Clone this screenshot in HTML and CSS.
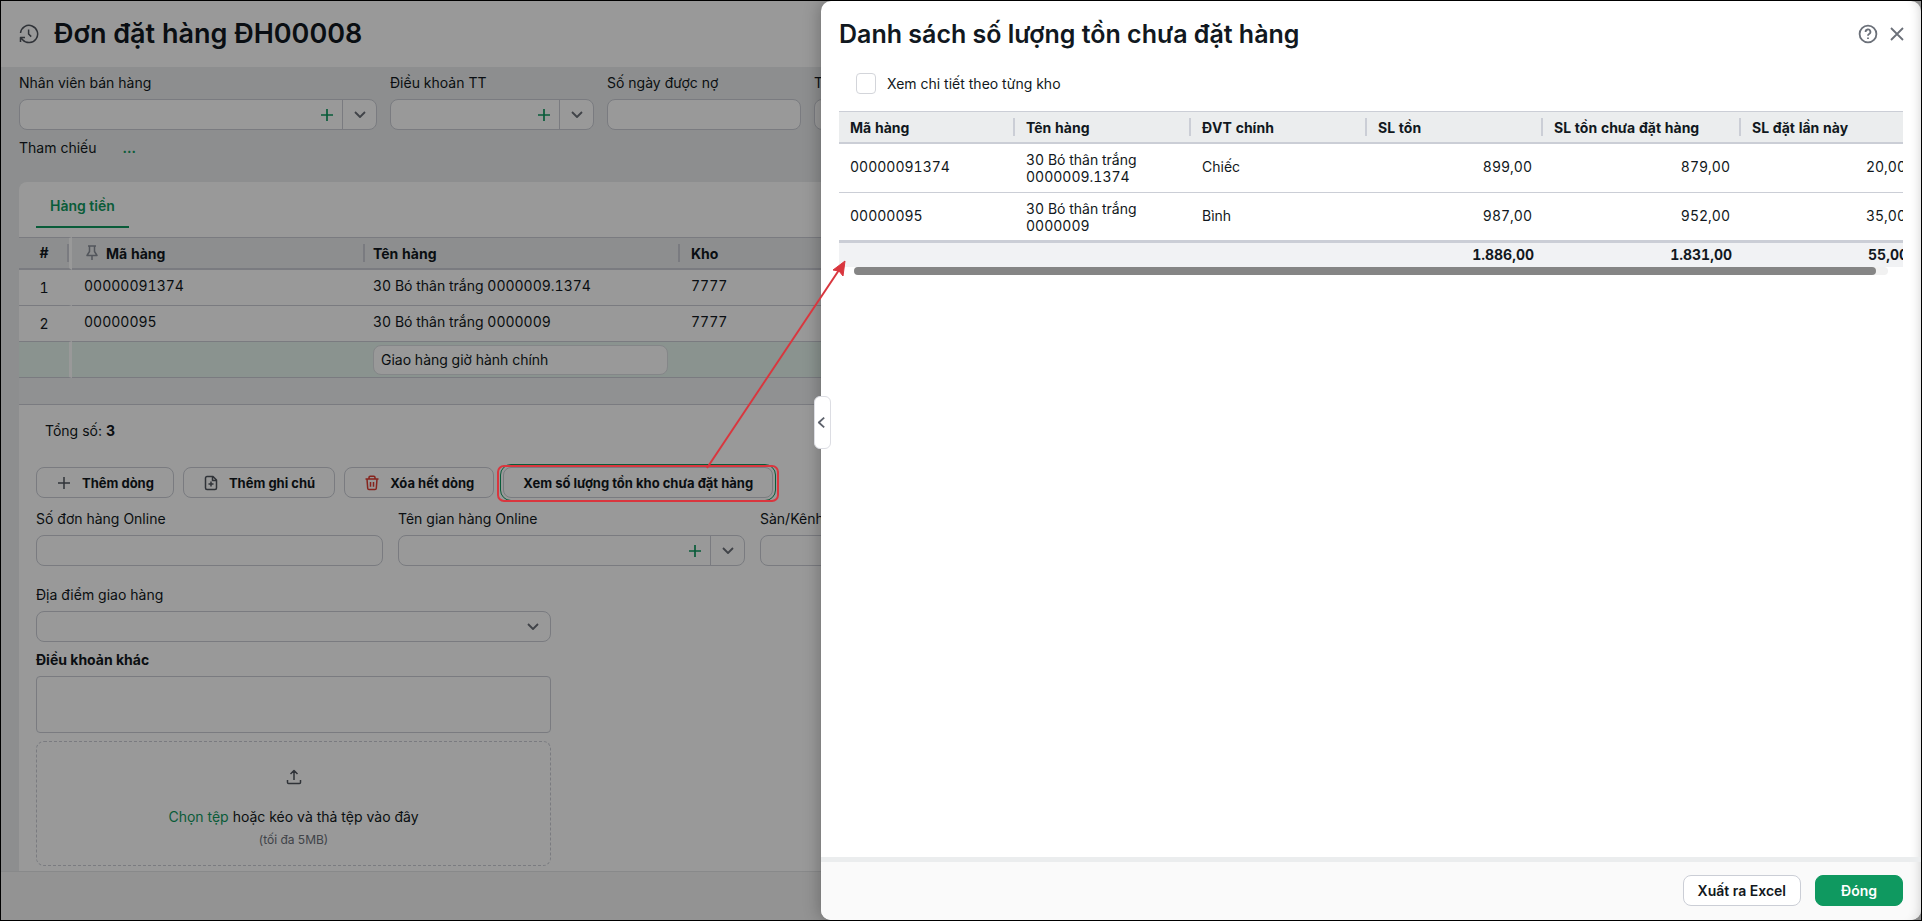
FILE: index.html
```html
<!DOCTYPE html>
<html lang="vi">
<head>
    <meta charset="UTF-8">
    <meta name="viewport" content="width=device-width, initial-scale=1.0">
    <title>Đơn đặt hàng ĐH00008</title>
    <link rel="stylesheet" href="styles.css">
</head>
<body>
    <!-- shared icons -->
    <svg class="icon-defs" width="0" height="0" aria-hidden="true">
        <symbol id="i-plus" viewBox="0 0 16 16"><path d="M8 2v12M2 8h12"/></symbol>
        <symbol id="i-down" viewBox="0 0 16 16"><path d="M3 5l5 5 5-5"/></symbol>
    </svg>

    <div class="page">
        <header class="page-header">
            <svg class="icon history-icon" viewBox="0 0 20 20">
                <path d="M1.500 9A8.600 8.600 0 1 1 3.600 15.700L1.500 13.500M1.500 18v-4.500h4.500M3.600 15.700A8.600 8.600 0 0 0 10 18.600M9.600 5.500v4.500l2.600 2.600"/>
            </svg>
            <h1>Đơn đặt hàng ĐH00008</h1>
        </header>

        <main class="content">
            <div class="top-fields">
                <div class="field w-employee">
                    <label for="employee">Nhân viên bán hàng</label>
                    <div class="combo">
                        <input type="text" id="employee">
                        <button type="button" class="add" aria-label="Thêm"><svg class="icon"><use href="#i-plus"/></svg></button>
                        <button type="button" class="drop" aria-label="Mở"><svg class="icon"><use href="#i-down"/></svg></button>
                    </div>
                </div>
                <div class="field w-term">
                    <label for="term">Điều khoản TT</label>
                    <div class="combo">
                        <input type="text" id="term">
                        <button type="button" class="add" aria-label="Thêm"><svg class="icon"><use href="#i-plus"/></svg></button>
                        <button type="button" class="drop" aria-label="Mở"><svg class="icon"><use href="#i-down"/></svg></button>
                    </div>
                </div>
                <div class="field w-days">
                    <label for="days">Số ngày được nợ</label>
                    <input type="text" id="days" class="box">
                </div>
                <div class="field w-days">
                    <label for="status">Tình trạng</label>
                    <input type="text" id="status" class="box">
                </div>
            </div>
            <div class="reference">
                <span>Tham chiếu</span>
                <a href="#">...</a>
            </div>

            <section class="panel">
                <nav class="tabs"><a href="#" class="tab">Hàng tiền</a></nav>

                <table class="items">
                    <colgroup>
                        <col class="c-no"><col class="c-code"><col class="c-name"><col>
                    </colgroup>
                    <thead>
                        <tr>
                            <th class="no">#</th>
                            <th>
                                <svg class="icon pin" viewBox="0 0 12 16"><path d="M2 1h8M3.500 1v5.500L1 10.500h10L8.500 6.500V1M6 10.500V15"/></svg>Mã hàng
                            </th>
                            <th>Tên hàng</th>
                            <th>Kho</th>
                        </tr>
                    </thead>
                    <tbody>
                        <tr>
                            <td class="no">1</td>
                            <td>00000091374</td>
                            <td>30 Bó thân trắng 0000009.1374</td>
                            <td>7777</td>
                        </tr>
                        <tr>
                            <td class="no">2</td>
                            <td>00000095</td>
                            <td>30 Bó thân trắng 0000009</td>
                            <td>7777</td>
                        </tr>
                        <tr class="note-row">
                            <td class="no"></td>
                            <td></td>
                            <td><input type="text" class="note" aria-label="Ghi chú" value="Giao hàng giờ hành chính"></td>
                            <td></td>
                        </tr>
                    </tbody>
                </table>
                <div class="table-end"></div>

                <div class="panel-body">
                    <p class="total">Tổng số: <b>3</b></p>

                    <div class="actions">
                        <button type="button" class="btn">
                            <svg class="icon"><use href="#i-plus"/></svg>Thêm dòng
                        </button>
                        <button type="button" class="btn">
                            <svg class="icon" viewBox="0 0 16 16"><path d="M10 1.500H4A1.500 1.500 0 0 0 2.500 3v10A1.500 1.500 0 0 0 4 14.500h8a1.500 1.500 0 0 0 1.500-1.500V5zM9.500 1.500V5.500h4M8 6.500v5M5.500 9h5"/></svg>Thêm ghi chú
                        </button>
                        <button type="button" class="btn">
                            <svg class="icon trash" viewBox="0 0 16 16"><path d="M1.500 4h13M5 4V2.500A1.200 1.200 0 0 1 6.200 1.300h3.600A1.200 1.200 0 0 1 11 2.500V4M3 4l.7 9.300a1.300 1.300 0 0 0 1.300 1.200h6a1.300 1.300 0 0 0 1.300-1.200L13 4M6.500 7v4.700M9.500 7v4.700"/></svg>Xóa hết dòng
                        </button>
                        <button type="button" class="btn focused">Xem số lượng tồn kho chưa đặt hàng</button>
                    </div>

                    <div class="online-fields">
                        <div class="field">
                            <label for="order-no">Số đơn hàng Online</label>
                            <input type="text" id="order-no" class="box">
                        </div>
                        <div class="field">
                            <label for="shop">Tên gian hàng Online</label>
                            <div class="combo">
                                <input type="text" id="shop">
                                <button type="button" class="add" aria-label="Thêm"><svg class="icon"><use href="#i-plus"/></svg></button>
                                <button type="button" class="drop" aria-label="Mở"><svg class="icon"><use href="#i-down"/></svg></button>
                            </div>
                        </div>
                        <div class="field">
                            <label for="channel">Sàn/Kênh</label>
                            <input type="text" id="channel" class="box">
                        </div>
                    </div>

                    <div class="narrow">
                        <div class="field place">
                            <label for="place">Địa điểm giao hàng</label>
                            <div class="combo">
                                <select id="place"><option></option></select>
                                <svg class="icon select-icon"><use href="#i-down"/></svg>
                            </div>
                        </div>
                        <label for="terms" class="strong">Điều khoản khác</label>
                        <textarea id="terms"></textarea>
                        <div class="dropzone">
                            <svg class="icon upload" viewBox="0 0 16 16"><path d="M8 11V1.500M4.500 5L8 1.500 11.500 5M1.500 11v2.500a1 1 0 0 0 1 1h11a1 1 0 0 0 1-1V11"/></svg>
                            <p><a href="#">Chọn tệp</a> hoặc kéo và thả tệp vào đây</p>
                            <small>(tối đa 5MB)</small>
                        </div>
                    </div>
                </div>
            </section>
        </main>
        <footer class="page-footer"></footer>
    </div>

    <div class="overlay"></div>

    <aside class="drawer">
        <button type="button" class="handle" aria-label="Mở rộng">
            <svg class="icon" viewBox="0 0 10 16"><path d="M8 2.500L2 8l6 5.500"/></svg>
        </button>
        <div class="drawer-header">
            <h2>Danh sách số lượng tồn chưa đặt hàng</h2>
            <button type="button" class="icon-btn" aria-label="Trợ giúp">
                <svg class="icon" width="20" height="20" viewBox="0 0 20 20"><circle cx="10" cy="10" r="8.400"/><path d="M7.600 7.900a2.400 2.400 0 1 1 3.500 2.100c-.8.400-1.100.8-1.100 1.700M10 13.600v1.400"/></svg>
            </button>
            <button type="button" class="icon-btn" aria-label="Đóng cửa sổ">
                <svg class="icon" width="14" height="14" viewBox="0 0 14 14"><path d="M1 1l12 12M13 1L1 13"/></svg>
            </button>
        </div>
        <div class="drawer-body">
            <label class="check"><input type="checkbox">Xem chi tiết theo từng kho</label>
            <div class="stock-wrap">
                <table class="stock">
                    <colgroup>
                        <col><col><col><col><col class="c-wide"><col>
                    </colgroup>
                    <thead>
                        <tr>
                            <th>Mã hàng</th>
                            <th>Tên hàng</th>
                            <th>ĐVT chính</th>
                            <th>SL tồn</th>
                            <th>SL tồn chưa đặt hàng</th>
                            <th>SL đặt lần này</th>
                        </tr>
                    </thead>
                    <tbody>
                        <tr>
                            <td>00000091374</td>
                            <td class="name">30 Bó thân trắng 0000009.1374</td>
                            <td>Chiếc</td>
                            <td class="num">899,00</td>
                            <td class="num">879,00</td>
                            <td class="num">20,00</td>
                        </tr>
                        <tr>
                            <td>00000095</td>
                            <td class="name">30 Bó thân trắng 0000009</td>
                            <td>Bình</td>
                            <td class="num">987,00</td>
                            <td class="num">952,00</td>
                            <td class="num">35,00</td>
                        </tr>
                    </tbody>
                    <tfoot>
                        <tr>
                            <td></td>
                            <td></td>
                            <td></td>
                            <td class="num">1.886,00</td>
                            <td class="num">1.831,00</td>
                            <td class="num">55,00</td>
                        </tr>
                    </tfoot>
                </table>
            </div>
            <div class="scroll"><div class="thumb"></div></div>
        </div>
        <div class="drawer-footer">
            <button type="button" class="btn export">Xuất ra Excel</button>
            <button type="button" class="btn primary">Đóng</button>
        </div>
    </aside>

    <!-- pointer from the button to the stock list -->
    <svg class="callout" width="860" height="520" viewBox="0 0 860 520">
        <rect x="497" y="465" width="280" height="35" rx="6"/>
        <path d="M706 467L838 269"/>
        <polygon points="844,260 842,275 838,270 832,269"/>
    </svg>
</body>
</html>
```
FILE: styles.css
```css
* {
    box-sizing: border-box;
}
body {
    position: relative;
    margin: 0;
    min-height: 100vh;
    display: flex;
    border: 1px solid #000;
    overflow: hidden;
    font-family: Inter, "Noto Sans", sans-serif;
    font-size: 14px;
    line-height: 20px;
    color: #111820;
}
h1, h2, p {
    margin: 0;
}
a {
    color: #0f9960;
    text-decoration: none;
}
button, input, select, textarea {
    font: inherit;
    color: inherit;
}
button {
    padding: 0;
    cursor: pointer;
}
.icon-defs {
    position: absolute;
}
.icon {
    width: 16px;
    height: 16px;
    flex: none;
    fill: none;
    stroke: #50555e;
    stroke-width: 1.5;
    stroke-linejoin: round;
}

/* order page */
.page {
    flex: 1;
    min-width: 0;
    display: flex;
    flex-direction: column;
    background: #ebedee;
}
.page-header {
    display: flex;
    align-items: center;
    gap: 15px;
    height: 66px;
    padding-left: 18px;
    background: #fff;
}
.page-header h1 {
    font-size: 27px;
    line-height: 36px;
    font-weight: 600;
}
.history-icon {
    width: 20px;
    height: 20px;
}
.content {
    flex: 1;
    display: flex;
    flex-direction: column;
    padding: 6px 0 0 18px;
}
.top-fields, .online-fields {
    display: flex;
    gap: 13px;
}
.field {
    flex: none;
    display: flex;
    flex-direction: column;
    gap: 6px;
}
.w-employee {
    width: 358px;
}
.w-term {
    width: 204px;
}
.w-days {
    width: 194px;
}
.box, .combo {
    width: 100%;
    height: 31px;
    padding: 0 8px;
    border: 1px solid #cbced6;
    border-radius: 8px;
    background: #fff;
}
.combo {
    display: flex;
    align-items: stretch;
    padding: 0;
}
.combo input, .combo select {
    flex: 1;
    min-width: 0;
    padding: 0 8px;
    border: none;
    background: none;
    appearance: none;
}
.combo button {
    display: flex;
    align-items: center;
    justify-content: center;
    width: 34px;
    border: none;
    background: none;
}
.combo .add {
    width: 30px;
}
.combo .add .icon {
    stroke: #0f9960;
    stroke-width: 1.7;
}
.combo .drop {
    border-left: 1px solid #cbced6;
}
.drop .icon, .select-icon {
    stroke: #6b7079;
    stroke-width: 1.8;
}
.reference {
    display: flex;
    gap: 26px;
    padding-top: 8px;
    margin-bottom: 24px;
}
.reference a {
    font-weight: 600;
}
.panel {
    flex: 1;
    background: #fff;
    border-top-left-radius: 8px;
}
.tabs {
    display: flex;
    padding-left: 17px;
    height: 55px;
}
.tab {
    height: 46px;
    padding: 14px 14px 0;
    border-bottom: 2px solid #0f9960;
    font-weight: 600;
}
.items, .stock {
    table-layout: fixed;
    border-spacing: 0;
    font-variant-numeric: tabular-nums;
}
.items {
    width: 100%;
}
.c-no {
    width: 53px;
}
.c-code {
    width: 293px;
}
.c-name {
    width: 315px;
}
th {
    height: 33px;
    text-align: left;
    font-weight: 700;
    border-top: 1px solid #cbced6;
    border-bottom: 2px solid #cbced6;
    background: #ebedee linear-gradient(#cbced6, #cbced6) no-repeat right center / 2px 18px;
}
.items th {
    padding: 2px 11px 0 8px;
}
.items td {
    height: 36px;
    padding: 0 11px 3px 8px;
    border-bottom: 1px solid #cbced6;
}
.items .no {
    padding: 0;
    text-align: center;
    border-right: 3px solid #fff;
}
.items th:nth-child(2), .items td:nth-child(2) {
    padding-left: 12px;
}
.items th:last-child, .items td:last-child {
    padding-left: 11px;
}
.pin {
    width: 12px;
    height: 16px;
    margin: 0 8px 0 2px;
    vertical-align: -2px;
    stroke: #8b909a;
}
.items .note-row td {
    padding-bottom: 0;
    background: #e6f5ee;
}
.note {
    display: block;
    width: 295px;
    height: 30px;
    padding: 0 7px;
    border: 1px solid #dcdfe3;
    border-radius: 8px;
    background: #fff;
}
.table-end {
    height: 27px;
    border-bottom: 1px solid #cbced6;
    background: #f1f2f3;
}
.panel-body {
    padding: 16px 17px 4px;
}
.total {
    padding-left: 9px;
}
.actions {
    display: flex;
    gap: 9px;
    margin: 26px 0 11px;
}
.btn {
    display: flex;
    align-items: center;
    justify-content: center;
    gap: 10px;
    height: 31px;
    padding: 0 19px;
    border: 1px solid #cbced6;
    border-radius: 8px;
    background: #fff;
    font-size: 13px;
    font-weight: 700;
}
.focused {
    outline: 1px solid #0f9960;
    outline-offset: 2px;
}
.trash {
    stroke: #e03c31;
}
.online-fields {
    gap: 15px;
}
.online-fields .field {
    width: 347px;
}
.narrow {
    display: flex;
    flex-direction: column;
    width: 515px;
    margin-top: 19px;
}
.select-icon {
    align-self: center;
    margin-right: 9px;
}
.strong {
    margin: 8px 0 6px;
    font-weight: 700;
}
textarea {
    height: 57px;
    border: 1px solid #cbced6;
    border-radius: 4px;
    resize: none;
}
.dropzone {
    display: flex;
    flex-direction: column;
    align-items: center;
    margin-top: 8px;
    padding: 27px 0 15px;
    border: 1px dashed #cbced6;
    border-radius: 8px;
}
.dropzone p {
    margin: 22px 0 3px;
}
.dropzone small {
    font-size: 12px;
    color: #6b7079;
}
.page-footer {
    height: 49px;
    border-top: 1px solid #e3e5e7;
    background: #f5f5f5;
}
.overlay {
    position: absolute;
    inset: 0;
    background: rgba(0, 0, 0, 0.4);
}

/* stock drawer */
.drawer {
    position: absolute;
    inset: 0 0 0 820px;
    display: flex;
    flex-direction: column;
    border-radius: 10px;
    background: #fff;
    box-shadow: inset -12px 0 12px -12px rgba(0, 0, 0, 0.2), -2px 0 16px rgba(0, 0, 0, 0.25);
}
.handle {
    position: absolute;
    left: -7px;
    top: 395px;
    display: flex;
    align-items: center;
    width: 17px;
    height: 53px;
    padding-left: 2px;
    border: 1px solid #dcdde3;
    border-radius: 6px;
    background: #fff;
}
.handle .icon {
    width: 9px;
    height: 15px;
    stroke: #5d616b;
    stroke-width: 2;
}
.drawer-header {
    display: flex;
    align-items: center;
    gap: 12px;
    height: 66px;
    padding: 0 17px 0 18px;
}
.drawer-header h2 {
    flex: 1;
    font-size: 25px;
    line-height: 32px;
    font-weight: 600;
}
.icon-btn {
    display: flex;
    border: none;
    background: none;
}
.icon-btn .icon {
    width: auto;
    height: auto;
    stroke: #6b7079;
    stroke-width: 1.8;
}
.drawer-body {
    flex: 1;
    padding: 6px 18px 0;
}
.check {
    display: flex;
    align-items: center;
    gap: 11px;
    margin: 0 0 17px 17px;
}
.check input {
    width: 20px;
    height: 21px;
    margin: 0;
    appearance: none;
    border: 1px solid #d3d5da;
    border-radius: 4px;
    background: #fff;
}
.stock-wrap {
    overflow: hidden;
}
.stock {
    width: 1078px;
}
.stock col {
    width: 176px;
}
.stock .c-wide {
    width: 198px;
}
.stock th {
    padding: 2px 11px 0;
}
.stock td {
    height: 49px;
    padding: 0 11px 3px;
    line-height: 17px;
    border-bottom: 1px solid #cbced6;
}
.stock .name {
    padding-bottom: 0;
    padding-right: 40px;
}
.stock tbody tr:last-child td {
    height: 50px;
    border-bottom: 3px solid #cbced6;
}
.stock .num {
    text-align: right;
}
.stock tfoot td {
    height: 24px;
    padding: 0 9px 2px 0;
    border: none;
    background: #f1f2f4;
    font-weight: 700;
}
.scroll {
    height: 8px;
    margin: 0 15px;
    background: #f1f1f1;
    border-radius: 4px;
}
.thumb {
    height: 8px;
    margin-right: 12px;
    border-radius: 4px;
    background: #858585;
}
.drawer-footer {
    display: flex;
    justify-content: flex-end;
    gap: 14px;
    height: 63px;
    padding: 13px 18px 0;
    border-top: 5px solid #ebedee;
    border-radius: 0 0 10px 10px;
    background: #fafafa;
    box-shadow: inset -12px 0 12px -12px rgba(0, 0, 0, 0.2);
}
.export, .primary {
    padding: 0 14px;
    font-size: 14px;
    font-weight: 600;
}
.primary {
    width: 88px;
    border-color: #0f9960;
    background: #0f9960;
    color: #fff;
}

/* red pointer */
.callout {
    position: absolute;
    left: 0;
    top: 0;
    fill: none;
    stroke: #d9363e;
    stroke-width: 2;
    pointer-events: none;
}
.callout polygon {
    fill: #d9363e;
    stroke-width: 1;
}
```
